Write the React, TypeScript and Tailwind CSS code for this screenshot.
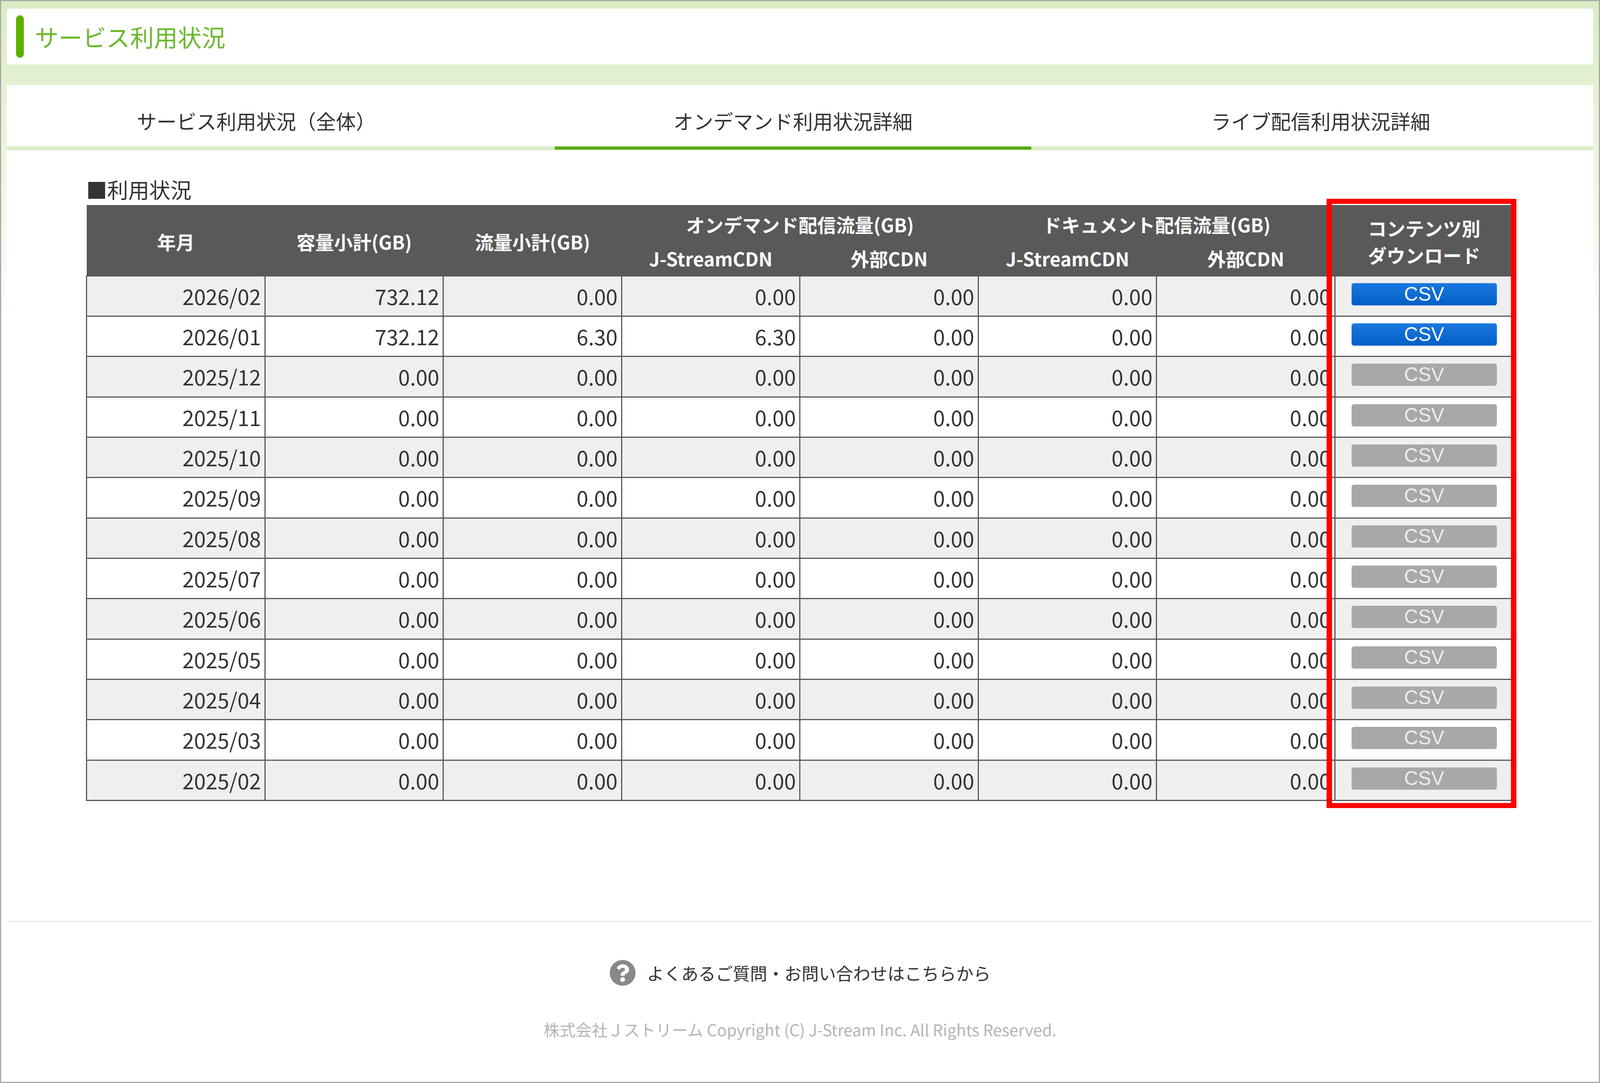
import { FaQuestionCircle } from 'react-icons/fa'

type UsageRow = {
  month: string
  storage: string
  traffic: string
  onDemandJs: string
  active: boolean
}

const rows: UsageRow[] = [
  { month: '2026/02', storage: '732.12', traffic: '0.00', onDemandJs: '0.00', active: true },
  { month: '2026/01', storage: '732.12', traffic: '6.30', onDemandJs: '6.30', active: true },
  { month: '2025/12', storage: '0.00', traffic: '0.00', onDemandJs: '0.00', active: false },
  { month: '2025/11', storage: '0.00', traffic: '0.00', onDemandJs: '0.00', active: false },
  { month: '2025/10', storage: '0.00', traffic: '0.00', onDemandJs: '0.00', active: false },
  { month: '2025/09', storage: '0.00', traffic: '0.00', onDemandJs: '0.00', active: false },
  { month: '2025/08', storage: '0.00', traffic: '0.00', onDemandJs: '0.00', active: false },
  { month: '2025/07', storage: '0.00', traffic: '0.00', onDemandJs: '0.00', active: false },
  { month: '2025/06', storage: '0.00', traffic: '0.00', onDemandJs: '0.00', active: false },
  { month: '2025/05', storage: '0.00', traffic: '0.00', onDemandJs: '0.00', active: false },
  { month: '2025/04', storage: '0.00', traffic: '0.00', onDemandJs: '0.00', active: false },
  { month: '2025/03', storage: '0.00', traffic: '0.00', onDemandJs: '0.00', active: false },
  { month: '2025/02', storage: '0.00', traffic: '0.00', onDemandJs: '0.00', active: false },
]

function NumCell({ value }: { value: string }) {
  return (
    <td className="border-[3px] border-[#5a5a5a] pr-[9px] text-right align-middle text-[54px] leading-none text-[#333]">
      {value}
    </td>
  )
}

// Widths are percentages: the sandbox window measured 4096x2773, not the 5953x2773 asked for.
// Font sizes and heights are taken from the 5953 reference.
export default function App() {
  return (
    <div className="relative flex h-screen w-full flex-col overflow-hidden border-[3px] border-[#ababab] bg-[linear-gradient(#daecc4,#ffffff_874px)] font-['Noto_Sans_CJK_JP',sans-serif]">
      {/* Page title */}
      <div className="mx-[0.35%] mt-[19px] flex h-[143px] items-center gap-[0.7%] rounded-[8px] bg-white pl-[0.57%]">
        <div className="h-[109px] w-[0.5%] rounded-full bg-[#5db000]" />
        <h1 className="text-[61px] font-normal leading-none text-[#6ab82e]">サービス利用状況</h1>
      </div>

      <div className="mx-[0.35%] mt-[53px] flex flex-1 flex-col bg-white">
        {/* Tabs */}
        <div className="flex h-[167px] items-start border-b-[10px] border-[#dcecc8] text-[51px] text-[#333]">
          <div className="ml-[0.71%] flex h-[157px] w-[30.03%] items-center justify-center pt-[26px]">
            サービス利用状況（全体）
          </div>
          <div className="ml-[3.8%] flex h-[165px] w-[30.03%] items-center justify-center border-b-[8px] border-[#55aa0a] pt-[26px]">
            オンデマンド利用状況詳細
          </div>
          <div className="ml-[3.24%] flex h-[157px] w-[30.03%] items-center justify-center pt-[26px]">
            ライブ配信利用状況詳細
          </div>
        </div>

        {/* Usage table */}
        <div className="mx-auto mt-[68px] w-[90%]">
          <div className="mb-[8px] text-[54px] leading-[64px] text-[#333]">■利用状況</div>
          <table className="w-full table-fixed border-collapse">
            <thead className="bg-[#595959] text-[48px] font-bold text-white">
              <tr className="h-[98px]">
                <th rowSpan={2} className="pt-[6px]">年月</th>
                <th rowSpan={2} className="pt-[6px]">容量小計(GB)</th>
                <th rowSpan={2} className="pt-[6px]">流量小計(GB)</th>
                <th colSpan={2}>オンデマンド配信流量(GB)</th>
                <th colSpan={2}>ドキュメント配信流量(GB)</th>
                <th rowSpan={2} className="pt-[6px] leading-[69px]">
                  コンテンツ別
                  <br />
                  ダウンロード
                </th>
              </tr>
              <tr className="h-[83px]">
                <th className="pb-[6px]">J-StreamCDN</th>
                <th className="pb-[6px]">外部CDN</th>
                <th className="pb-[6px]">J-StreamCDN</th>
                <th className="pb-[6px]">外部CDN</th>
              </tr>
            </thead>
            <tbody>
              {rows.map((row, i) => (
                <tr key={row.month} className={i % 2 === 0 ? 'h-[103.35px] bg-[#efefef]' : 'h-[103.35px] bg-white'}>
                  <NumCell value={row.month} />
                  <NumCell value={row.storage} />
                  <NumCell value={row.traffic} />
                  <NumCell value={row.onDemandJs} />
                  <NumCell value="0.00" />
                  <NumCell value="0.00" />
                  <NumCell value="0.00" />
                  <td className="border-[3px] border-[#5a5a5a] pt-[17px] align-top">
                    <button
                      type="button"
                      className={
                        row.active
                          ? "mx-auto block h-[57px] w-[82%] rounded-[6px] bg-linear-to-b from-[#1a78e0] to-[#0060c6] font-['Liberation_Sans',sans-serif] text-[50px] font-normal leading-[57px] text-white"
                          : "mx-auto block h-[57px] w-[82%] rounded-[6px] bg-[#a8a8a8] font-['Liberation_Sans',sans-serif] text-[50px] font-normal leading-[57px] text-[#eeeeee]"
                      }
                    >
                      CSV
                    </button>
                  </td>
                </tr>
              ))}
            </tbody>
          </table>
        </div>

        {/* Footer */}
        <div className="mt-[306px] border-t-[4px] border-[#ececec]">
          <div className="mt-[95px] flex items-center justify-center gap-[28px] text-[44px] leading-[71px] text-[#333]">
            <FaQuestionCircle className="h-[68px] w-[68px] text-[#888888]" />
            <span>よくあるご質問・お問い合わせはこちらから</span>
          </div>
          <p className="mt-[83px] text-center text-[41px] leading-[50px] text-[#b4b4b4]">
            株式会社Ｊストリーム Copyright (C) J-Stream Inc. All Rights Reserved.
          </p>
        </div>
      </div>

      {/* Red annotation frame */}
      <div className="absolute left-[82.95%] top-[506px] h-[1560px] w-[11.9%] border-x-[14px] border-y-[13px] border-[#ff0000]" />
    </div>
  )
}
